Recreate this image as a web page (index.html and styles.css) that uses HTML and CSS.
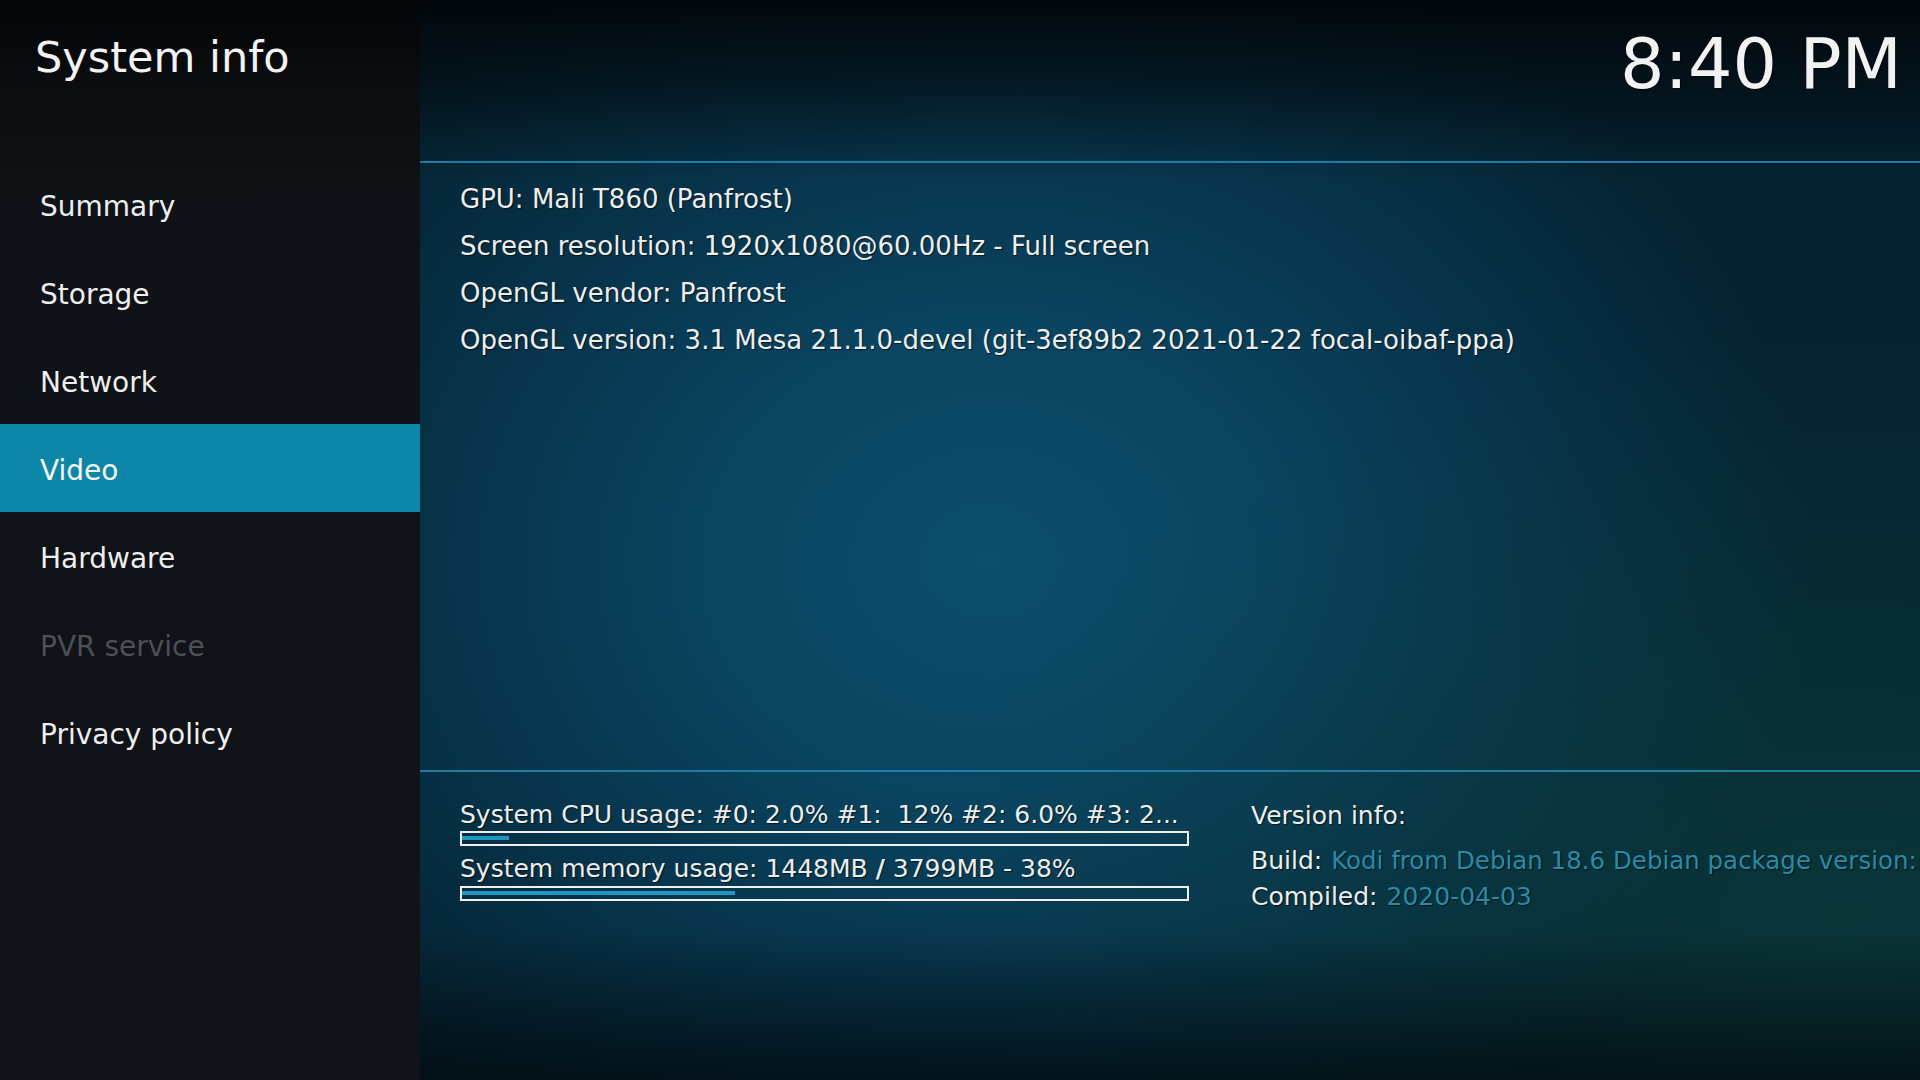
FILE: index.html
```html
<!DOCTYPE html>
<html lang="en">
<head>
    <meta charset="UTF-8">
    <meta name="viewport" content="width=device-width, initial-scale=1.0">
    <title>System info</title>
    <link rel="stylesheet" href="styles.css">
</head>
<body>
    <div class="sidebar">
        <h1 class="title">System info</h1>
        <ul class="menu">
            <li class="menu-item">Summary</li>
            <li class="menu-item">Storage</li>
            <li class="menu-item">Network</li>
            <li class="menu-item active">Video</li>
            <li class="menu-item">Hardware</li>
            <li class="menu-item disabled">PVR service</li>
            <li class="menu-item">Privacy policy</li>
        </ul>
    </div>

    <div class="main">
        <div class="topbar">
            <span class="clock">8:40 PM</span>
        </div>

        <div class="info-list">
            <div class="info-line">GPU: Mali T860 (Panfrost)</div>
            <div class="info-line">Screen resolution: 1920x1080@60.00Hz - Full screen</div>
            <div class="info-line">OpenGL vendor: Panfrost</div>
            <div class="info-line">OpenGL version: 3.1 Mesa 21.1.0-devel (git-3ef89b2 2021-01-22 focal-oibaf-ppa)</div>
        </div>

        <div class="stats">
            <div class="usage">
                <div class="usage-label">System CPU usage: #0: 2.0% #1:  12% #2: 6.0% #3: 2...</div>
                <div class="usage-bar"><div class="usage-fill" style="width: 47px"></div></div>
                <div class="usage-label second">System memory usage: 1448MB <b>/</b> 3799MB - 38%</div>
                <div class="usage-bar"><div class="usage-fill" style="width: 273px"></div></div>
            </div>
            <div class="version">
                <div class="version-title">Version info:</div>
                <div class="version-row build">
                    <span class="version-key">Build:</span>
                    <span class="version-value">Kodi from Debian 18.6 Debian package version:</span>
                </div>
                <div class="version-row">
                    <span class="version-key">Compiled:</span>
                    <span class="version-value">2020-04-03</span>
                </div>
            </div>
        </div>
    </div>
</body>
</html>
```

FILE: styles.css
```css
html, body {
    margin: 0;
    padding: 0;
    width: 1920px;
    height: 1080px;
    overflow: hidden;
}
body {
    display: flex;
    font-family: "DejaVu Sans", Verdana, sans-serif;
    color: #eeeeee;
    background-color: #041821;
}
.sidebar {
    width: 420px;
    flex-shrink: 0;
    background: linear-gradient(to bottom, #040506 0, #0b0d10 90px, #0f1216 200px, #101317 100%);
}
.title {
    margin: 0;
    height: 160px;
    box-sizing: border-box;
    padding: 32px 0 0 35px;
    font-size: 43px;
    font-weight: normal;
    color: #f2f2f2;
}
.menu {
    list-style: none;
    margin: 0;
    padding: 0;
}
.menu-item {
    height: 88px;
    box-sizing: border-box;
    padding: 4px 0 0 40px;
    display: flex;
    align-items: center;
    font-size: 28px;
    color: #eeeeee;
}
.menu-item.active {
    background-color: #0e86a8;
    color: #f4f4f4;
}
.menu-item.disabled {
    color: #4a5157;
}
.main {
    flex: 1;
    min-width: 0;
    overflow: hidden;
    display: flex;
    flex-direction: column;
    background:
        linear-gradient(to bottom, rgba(1, 5, 8, 0.92) 0, rgba(1, 5, 8, 0.55) 80px, rgba(1, 5, 8, 0) 180px),
        linear-gradient(to top, rgba(1, 8, 12, 0.7) 0, rgba(1, 8, 12, 0) 150px),
        radial-gradient(ellipse 60% 55% at 95% 85%, rgba(12, 62, 60, 0.7) 0, rgba(12, 62, 60, 0) 100%),
        radial-gradient(ellipse 55% 62% at 38% 52%, #0b4e6d 0, #0a4460 35%, #07344b 65%, #052230 100%);
    text-shadow: 1px 1px 1px rgba(0, 0, 0, 0.6);
}
.topbar {
    height: 163px;
    flex-shrink: 0;
    box-sizing: border-box;
    padding: 23px 18px 0 0;
    text-align: right;
    border-bottom: 2px solid #1c7ea5;
}
.clock {
    font-size: 70px;
    color: #f2f2f2;
}
.info-list {
    height: 609px;
    flex-shrink: 0;
    box-sizing: border-box;
    padding: 13px 0 0 40px;
    border-bottom: 2px solid #1c7ea5;
}
.info-line {
    font-size: 26px;
    line-height: 47px;
    white-space: nowrap;
}
.stats {
    display: flex;
    gap: 62px;
    padding: 29px 0 0 40px;
    white-space: nowrap;
}
.usage {
    width: 729px;
    flex-shrink: 0;
}
.usage-label {
    font-size: 25px;
    line-height: 28px;
    white-space: pre;
    overflow: hidden;
}
.usage-label b {
    font-weight: bold;
}
.usage-label.second {
    margin-top: 9px;
}
.usage-bar {
    margin-top: 2px;
    height: 15px;
    box-sizing: border-box;
    border: 2px solid #f0f0f0;
    padding: 3px 0 0 0;
}
.usage-label.second + .usage-bar {
    margin-top: 3px;
}
.usage-fill {
    height: 4px;
    background-color: #1f97c2;
}
.version {
    padding-top: 1px;
    font-size: 25px;
    line-height: 28px;
}
.version-row {
    display: flex;
    gap: 9px;
}
.version-row.build {
    margin-top: 17px;
    margin-bottom: 8px;
}
.version-row.build .version-value {
    font-size: 24.5px;
}
.version-value {
    color: #2b8aa8;
}
```
